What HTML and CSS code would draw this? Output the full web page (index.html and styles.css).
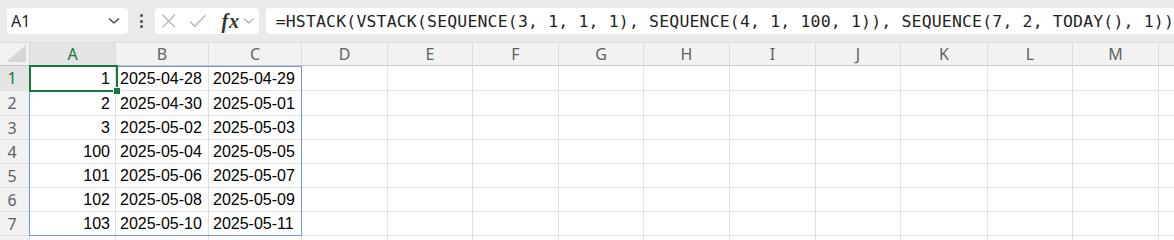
FILE: index.html
```html
<!DOCTYPE html>
<html lang="en">
<head>
    <meta charset="UTF-8">
    <meta name="viewport" content="width=device-width, initial-scale=1.0">
    <title>Sheet</title>
    <link rel="stylesheet" href="styles.css">
</head>
<body>
    <div class="toolbar">
        <div class="namebox">
            <span>A1</span>
            <svg width="12" height="8" viewBox="0 0 12 8"><path d="M1 1.5 L6 6 L11 1.5" fill="none" stroke="#333" stroke-width="1.2"/></svg>
        </div>
        <div class="dots"><i></i><i></i><i></i></div>
        <div class="fxbox">
            <svg class="cancel" width="16" height="16" viewBox="0 0 16 16"><path d="M1.5 1.5 L14.5 14.5 M14.5 1.5 L1.5 14.5" stroke="#b5b5b5" stroke-width="1.3" fill="none"/></svg>
            <svg class="enter" width="18" height="16" viewBox="0 0 18 16"><path d="M1 8.5 L6 13.5 L17 2" stroke="#b5b5b5" stroke-width="1.3" fill="none"/></svg>
            <span class="fx"><i>f</i>x</span>
            <svg width="12" height="8" viewBox="0 0 12 8"><path d="M1 1.5 L6 6 L11 1.5" fill="none" stroke="#a8a8a8" stroke-width="1.2"/></svg>
        </div>
        <div class="formula">=HSTACK(VSTACK(SEQUENCE(3, 1, 1, 1), SEQUENCE(4, 1, 100, 1)), SEQUENCE(7, 2, TODAY(), 1))</div>
    </div>

    <div class="sheet">
        <div class="corner"><svg width="20" height="17" viewBox="0 0 20 17"><path d="M20 0 L20 17 L0 17 Z" fill="#d6d6d6"/></svg></div>
        <div class="colhead active">A</div>
        <div class="colhead">B</div>
        <div class="colhead">C</div>
        <div class="colhead">D</div>
        <div class="colhead">E</div>
        <div class="colhead">F</div>
        <div class="colhead">G</div>
        <div class="colhead">H</div>
        <div class="colhead">I</div>
        <div class="colhead">J</div>
        <div class="colhead">K</div>
        <div class="colhead">L</div>
        <div class="colhead">M</div>
        <div class="colhead"></div>

        <div class="rowhead active">1</div><div class="cell num">1</div><div class="cell">2025-04-28</div><div class="cell">2025-04-29</div><div class="cell"></div><div class="cell"></div><div class="cell"></div><div class="cell"></div><div class="cell"></div><div class="cell"></div><div class="cell"></div><div class="cell"></div><div class="cell"></div><div class="cell"></div><div class="cell"></div>
        <div class="rowhead">2</div><div class="cell num">2</div><div class="cell">2025-04-30</div><div class="cell">2025-05-01</div><div class="cell"></div><div class="cell"></div><div class="cell"></div><div class="cell"></div><div class="cell"></div><div class="cell"></div><div class="cell"></div><div class="cell"></div><div class="cell"></div><div class="cell"></div><div class="cell"></div>
        <div class="rowhead">3</div><div class="cell num">3</div><div class="cell">2025-05-02</div><div class="cell">2025-05-03</div><div class="cell"></div><div class="cell"></div><div class="cell"></div><div class="cell"></div><div class="cell"></div><div class="cell"></div><div class="cell"></div><div class="cell"></div><div class="cell"></div><div class="cell"></div><div class="cell"></div>
        <div class="rowhead">4</div><div class="cell num">100</div><div class="cell">2025-05-04</div><div class="cell">2025-05-05</div><div class="cell"></div><div class="cell"></div><div class="cell"></div><div class="cell"></div><div class="cell"></div><div class="cell"></div><div class="cell"></div><div class="cell"></div><div class="cell"></div><div class="cell"></div><div class="cell"></div>
        <div class="rowhead">5</div><div class="cell num">101</div><div class="cell">2025-05-06</div><div class="cell">2025-05-07</div><div class="cell"></div><div class="cell"></div><div class="cell"></div><div class="cell"></div><div class="cell"></div><div class="cell"></div><div class="cell"></div><div class="cell"></div><div class="cell"></div><div class="cell"></div><div class="cell"></div>
        <div class="rowhead">6</div><div class="cell num">102</div><div class="cell">2025-05-08</div><div class="cell">2025-05-09</div><div class="cell"></div><div class="cell"></div><div class="cell"></div><div class="cell"></div><div class="cell"></div><div class="cell"></div><div class="cell"></div><div class="cell"></div><div class="cell"></div><div class="cell"></div><div class="cell"></div>
        <div class="rowhead">7</div><div class="cell num">103</div><div class="cell">2025-05-10</div><div class="cell">2025-05-11</div><div class="cell"></div><div class="cell"></div><div class="cell"></div><div class="cell"></div><div class="cell"></div><div class="cell"></div><div class="cell"></div><div class="cell"></div><div class="cell"></div><div class="cell"></div><div class="cell"></div>
        <div class="rowhead"></div><div class="cell"></div><div class="cell"></div><div class="cell"></div><div class="cell"></div><div class="cell"></div><div class="cell"></div><div class="cell"></div><div class="cell"></div><div class="cell"></div><div class="cell"></div><div class="cell"></div><div class="cell"></div><div class="cell"></div><div class="cell"></div>

        <div class="spill"></div>
        <div class="selection"><span class="handle"></span></div>
    </div>
</body>
</html>
```

FILE: styles.css
```css
body {
    margin: 0;
    padding: 0;
    width: 1174px;
    height: 240px;
    overflow: hidden;
    background-color: #fff;
    font-family: 'Noto Sans', 'Open Sans', sans-serif;
}

.toolbar {
    display: flex;
    align-items: center;
    height: 43px;
    padding: 0 0 0 7px;
    box-sizing: border-box;
    background-color: #e8eaec;
    border-bottom: 1px solid #dcdcdc;
}

.namebox, .fxbox, .formula {
    height: 26px;
    background-color: #fff;
    border-radius: 4px;
    box-sizing: border-box;
    display: flex;
    align-items: center;
}

.namebox {
    width: 124px;
    padding: 0 8px 0 4px;
    justify-content: space-between;
    font-size: 16px;
    color: #1f1f1f;
}

.dots {
    width: 28px;
    display: flex;
    flex-direction: column;
    align-items: center;
    gap: 2.5px;
}

.dots i {
    width: 3px;
    height: 3px;
    border-radius: 50%;
    background-color: #4a4a4a;
}

.fxbox {
    width: 104px;
    padding: 0 4px 0 6px;
}

.fxbox .cancel {
    margin-right: 13px;
}

.fxbox .enter {
    margin-right: 15px;
}

.fx {
    font-family: 'Liberation Serif', serif;
    font-size: 20px;
    font-weight: bold;
    font-style: italic;
    color: #333;
    margin-right: 4px;
    line-height: 1;
}

.fx i {
    font-style: italic;
    margin-right: 1px;
}

.formula {
    flex: 1;
    margin-left: 7px;
    border-radius: 4px 0 0 4px;
    padding-left: 10px;
    font-family: 'DejaVu Sans Mono', monospace;
    font-size: 16.5px;
    letter-spacing: 0.16px;
    color: #1f1f1f;
    white-space: nowrap;
}

.sheet {
    position: relative;
    display: grid;
    grid-template-columns: 30px 86px 93px 93px 86px 85px 86px 85px 86px 86px 85px 87px 85px 86px 86px;
    grid-template-rows: 23px 25px 25px 24px 24px 24px 24px 24px 24px;
    height: 197px;
    overflow: hidden;
    background-color: #fff;
}

.corner, .colhead, .rowhead {
    background-color: #f2f2f2;
    color: #616161;
    font-size: 16px;
    box-sizing: border-box;
}

.corner {
    display: flex;
    align-items: flex-end;
    justify-content: flex-end;
    padding: 0 3px 3px 0;
    border-right: 1px solid #d4d4d4;
    border-bottom: 1px solid #c8c8c8;
}

.colhead {
    display: flex;
    align-items: center;
    justify-content: center;
    border-right: 1px solid #dcdcdc;
    border-bottom: 1px solid #c8c8c8;
}

.rowhead {
    display: flex;
    align-items: center;
    justify-content: center;
    padding-right: 5px;
    border-right: 1px solid #d4d4d4;
    border-bottom: 1px solid #e1e1e1;
}

.colhead.active, .rowhead.active {
    background-color: #e4e4e4;
    color: #137a3e;
}

.colhead.active {
    border-bottom: 1px solid #b8c9bc;
}

.cell {
    font-family: 'Liberation Sans', Arial, sans-serif;
    font-size: 16px;
    color: #000;
    display: flex;
    align-items: center;
    padding: 1px 4px 0 4px;
    box-sizing: border-box;
    border-right: 1px solid #e1e1e1;
    border-bottom: 1px solid #e1e1e1;
    white-space: nowrap;
    overflow: hidden;
}

.cell.num {
    justify-content: flex-end;
    padding-right: 5px;
}

.spill {
    position: absolute;
    grid-column: 2 / 5;
    grid-row: 2 / 9;
    left: -1px;
    right: 0;
    top: 0;
    bottom: 0;
    border: 1px solid #6e98d8;
    pointer-events: none;
}

.selection {
    position: absolute;
    grid-column: 2 / 3;
    grid-row: 2 / 3;
    left: -1px;
    right: -2px;
    top: -1px;
    bottom: -1px;
    border: 2px solid #137a3e;
    pointer-events: none;
}

.handle {
    position: absolute;
    right: -5px;
    bottom: -5px;
    width: 6px;
    height: 6px;
    background-color: #137a3e;
    border: 1px solid #fff;
}
```
